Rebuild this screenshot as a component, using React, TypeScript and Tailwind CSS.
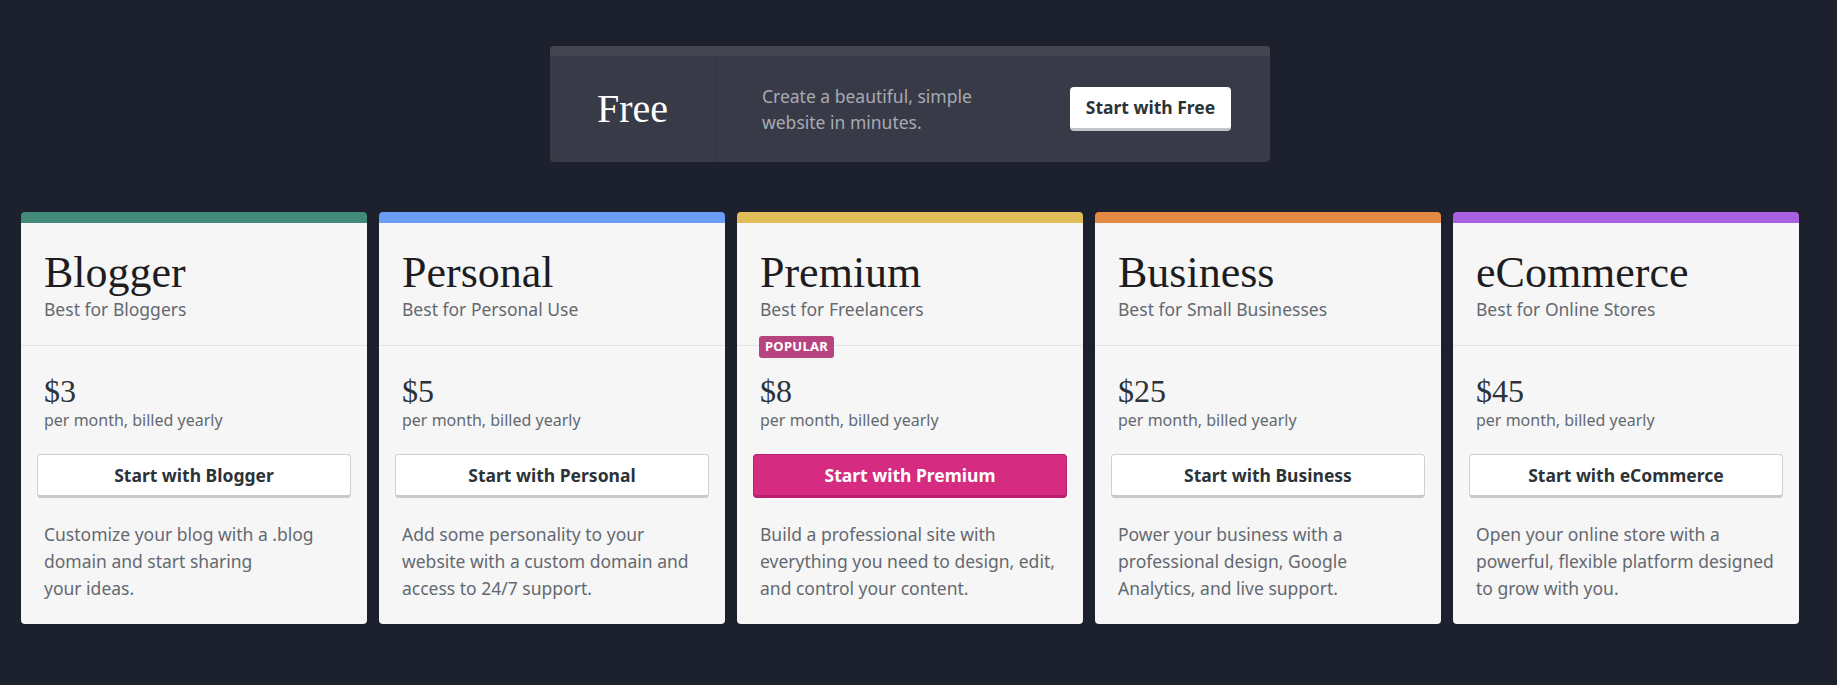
import React from 'react'

interface Plan {
  name: string
  tagline: string
  price: string
  stripe: string
  lines: string[]
  popular?: boolean
}

const plans: Plan[] = [
  {
    name: 'Blogger',
    tagline: 'Best for Bloggers',
    price: '$3',
    stripe: 'border-[#428b7a]',
    lines: ['Customize your blog with a .blog', 'domain and start sharing', 'your ideas.'],
  },
  {
    name: 'Personal',
    tagline: 'Best for Personal Use',
    price: '$5',
    stripe: 'border-[#6c9cf5]',
    lines: ['Add some personality to your', 'website with a custom domain and', 'access to 24/7 support.'],
  },
  {
    name: 'Premium',
    tagline: 'Best for Freelancers',
    price: '$8',
    stripe: 'border-[#e1bd5a]',
    lines: ['Build a professional site with', 'everything you need to design, edit,', 'and control your content.'],
    popular: true,
  },
  {
    name: 'Business',
    tagline: 'Best for Small Businesses',
    price: '$25',
    stripe: 'border-[#e58a42]',
    lines: ['Power your business with a', 'professional design, Google', 'Analytics, and live support.'],
  },
  {
    name: 'eCommerce',
    tagline: 'Best for Online Stores',
    price: '$45',
    stripe: 'border-[#a95fe2]',
    lines: ['Open your online store with a', 'powerful, flexible platform designed', 'to grow with you.'],
  },
]

const serif = "font-['Liberation_Serif',serif]"

function PlanCard({ plan }: { plan: Plan }) {
  return (
    <div className={`bg-[#f6f6f6] rounded-[4px] overflow-hidden border-t-[11px] ${plan.stripe}`}>
      {/* Header */}
      <div className="px-[23px] pt-[25px] pb-[25px] border-b border-[#e2e2e2]">
        <h2 className={`${serif} text-[44px] leading-[50px] text-[#1d1d1f]`}>{plan.name}</h2>
        <p className="text-[17.5px] leading-[22px] text-[#646970]">{plan.tagline}</p>
      </div>

      {/* Price */}
      <div className="relative">
        {plan.popular && (
          <span className="absolute left-[22px] -top-[10px] h-[22px] w-[75px] flex items-center justify-center rounded-[3px] bg-[#b8447f] text-white text-[13px] font-bold tracking-[0.3px]">
            POPULAR
          </span>
        )}
        <div className="px-[23px] pt-[26px]">
          <p className={`${serif} text-[32px] leading-[38px] text-[#2c3338]`}>{plan.price}</p>
          <p className="text-[16px] leading-[20px] text-[#646970]">per month, billed yearly</p>
        </div>
        <div className="px-[16px] mt-[24px]">
          {plan.popular ? (
            <button className="w-full h-[44px] rounded-[4px] bg-[#d52c82] border border-[#b81f6c] border-b-[3px] text-white text-[17.5px] font-bold">
              Start with {plan.name}
            </button>
          ) : (
            <button className="w-full h-[44px] rounded-[4px] bg-white border border-[#d0d1d3] border-b-[3px] border-b-[#c8c9cc] text-[#2c3338] text-[17.5px] font-bold">
              Start with {plan.name}
            </button>
          )}
        </div>
        <p className="px-[23px] pt-[23px] pb-[22px] text-[17.5px] leading-[27px] text-[#646970] whitespace-nowrap">
          {plan.lines.map((l, i) => (
            <React.Fragment key={i}>
              {l}
              {i < plan.lines.length - 1 && <br />}
            </React.Fragment>
          ))}
        </p>
      </div>
    </div>
  )
}

export default function App() {
  return (
    <div className="min-h-[685px] bg-[#1d212e] font-['Noto_Sans',sans-serif]">
      <div className="w-[1820px] pt-[46px]">
        {/* Free plan banner */}
        <div className="flex justify-center">
          <div className="w-[720px] rounded-[4px] overflow-hidden bg-[#383b47] border-t-[10px] border-[#43464f]">
            <div className="flex items-center h-[106px]">
              <div className="w-[166px] h-full flex items-center justify-center border-r border-[#31343f]">
                <span className={`${serif} text-[40px] text-white`}>Free</span>
              </div>
              <p className="ml-[46px] text-[17.5px] leading-[26px] text-[#a7aab2]">
                Create a beautiful, simple
                <br />
                website in minutes.
              </p>
              <button className="ml-auto mr-[39px] w-[161px] h-[44px] rounded-[4px] bg-white border-b-[3px] border-[#c3c4c7] text-[#2c3338] text-[17.5px] font-bold">
                Start with Free
              </button>
            </div>
          </div>
        </div>

        {/* Paid plans */}
        <div className="grid grid-cols-5 gap-[12px] px-[21px] mt-[50px]">
          {plans.map((p) => (
            <PlanCard key={p.name} plan={p} />
          ))}
        </div>
      </div>
    </div>
  )
}
